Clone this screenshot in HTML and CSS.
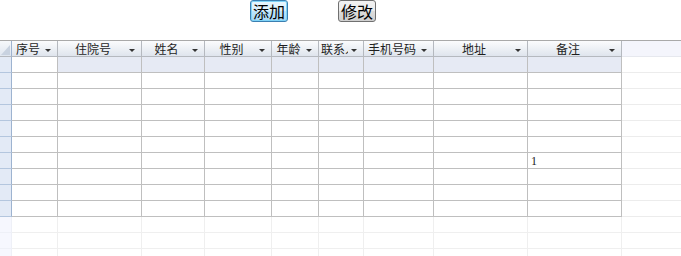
FILE: index.html
```html
<!DOCTYPE html>
<html lang="zh-CN">

<head>
    <meta charset="UTF-8">
    <meta name="viewport" content="width=device-width, initial-scale=1.0">
    <title>病人信息</title>
    <link rel="stylesheet" href="styles.css">
</head>

<body>
    <div class="toolbar">
        <button class="btn btn-focus">添加</button>
        <button class="btn">修改</button>
    </div>

    <div class="grid">
        <div class="row head">
            <div class="rh corner"><svg width="11" height="15" viewBox="0 0 11 15"><polygon points="1,14 10,4 10,14" fill="#c8d2e0" /></svg></div>
            <div class="hc"><span class="label">序号</span><i class="arrow"></i></div>
            <div class="hc"><span class="label">住院号</span><i class="arrow"></i></div>
            <div class="hc"><span class="label">姓名</span><i class="arrow"></i></div>
            <div class="hc"><span class="label">性别</span><i class="arrow"></i></div>
            <div class="hc"><span class="label">年龄</span><i class="arrow"></i></div>
            <div class="hc"><span class="label">联系人</span><i class="arrow"></i></div>
            <div class="hc"><span class="label">手机号码</span><i class="arrow"></i></div>
            <div class="hc"><span class="label">地址</span><i class="arrow"></i></div>
            <div class="hc"><span class="label">备注</span><i class="arrow"></i></div>
            <div class="hpad"></div>
        </div>

        <div class="row new">
            <div class="rh"></div><div class="c cur"></div><div class="c"></div><div class="c"></div><div class="c"></div><div class="c"></div><div class="c"></div><div class="c"></div><div class="c"></div><div class="c"></div><div class="pad"></div>
        </div>
        <div class="row">
            <div class="rh"></div><div class="c"></div><div class="c"></div><div class="c"></div><div class="c"></div><div class="c"></div><div class="c"></div><div class="c"></div><div class="c"></div><div class="c"></div><div class="pad"></div>
        </div>
        <div class="row">
            <div class="rh"></div><div class="c"></div><div class="c"></div><div class="c"></div><div class="c"></div><div class="c"></div><div class="c"></div><div class="c"></div><div class="c"></div><div class="c"></div><div class="pad"></div>
        </div>
        <div class="row">
            <div class="rh"></div><div class="c"></div><div class="c"></div><div class="c"></div><div class="c"></div><div class="c"></div><div class="c"></div><div class="c"></div><div class="c"></div><div class="c"></div><div class="pad"></div>
        </div>
        <div class="row">
            <div class="rh"></div><div class="c"></div><div class="c"></div><div class="c"></div><div class="c"></div><div class="c"></div><div class="c"></div><div class="c"></div><div class="c"></div><div class="c"></div><div class="pad"></div>
        </div>
        <div class="row">
            <div class="rh"></div><div class="c"></div><div class="c"></div><div class="c"></div><div class="c"></div><div class="c"></div><div class="c"></div><div class="c"></div><div class="c"></div><div class="c"></div><div class="pad"></div>
        </div>
        <div class="row">
            <div class="rh"></div><div class="c"></div><div class="c"></div><div class="c"></div><div class="c"></div><div class="c"></div><div class="c"></div><div class="c"></div><div class="c"></div><div class="c">1</div><div class="pad"></div>
        </div>
        <div class="row">
            <div class="rh"></div><div class="c"></div><div class="c"></div><div class="c"></div><div class="c"></div><div class="c"></div><div class="c"></div><div class="c"></div><div class="c"></div><div class="c"></div><div class="pad"></div>
        </div>
        <div class="row">
            <div class="rh"></div><div class="c"></div><div class="c"></div><div class="c"></div><div class="c"></div><div class="c"></div><div class="c"></div><div class="c"></div><div class="c"></div><div class="c"></div><div class="pad"></div>
        </div>
        <div class="row">
            <div class="rh"></div><div class="c"></div><div class="c"></div><div class="c"></div><div class="c"></div><div class="c"></div><div class="c"></div><div class="c"></div><div class="c"></div><div class="c"></div><div class="pad"></div>
        </div>

        <!-- empty area under the data -->
        <div class="row ghost">
            <div class="rh"></div><div class="c"></div><div class="c"></div><div class="c"></div><div class="c"></div><div class="c"></div><div class="c"></div><div class="c"></div><div class="c"></div><div class="c"></div><div class="pad"></div>
        </div>
        <div class="row ghost">
            <div class="rh"></div><div class="c"></div><div class="c"></div><div class="c"></div><div class="c"></div><div class="c"></div><div class="c"></div><div class="c"></div><div class="c"></div><div class="c"></div><div class="pad"></div>
        </div>
        <div class="row ghost">
            <div class="rh"></div><div class="c"></div><div class="c"></div><div class="c"></div><div class="c"></div><div class="c"></div><div class="c"></div><div class="c"></div><div class="c"></div><div class="c"></div><div class="pad"></div>
        </div>
    </div>
</body>

</html>
```

FILE: styles.css
```css
body {
    margin: 0;
    height: 256px;
    overflow: hidden;
    background: #fff;
    font-family: "Noto Sans CJK SC", "DejaVu Sans", sans-serif;
}

.toolbar {
    height: 40px;
    display: flex;
    align-items: flex-start;
    gap: 50px;
    padding-left: 250px;
    box-sizing: border-box;
}

.btn {
    height: 22px;
    padding: 0 2px;
    margin: 0;
    font-family: "Noto Sans CJK SC", sans-serif;
    font-size: 16px;
    line-height: 18px;
    color: #000;
    border: 1px solid #707070;
    border-radius: 3px;
    background: linear-gradient(#f2f2f2 0%, #ebebeb 50%, #dddddd 51%, #cfcfcf 100%);
}

.btn-focus {
    border-color: #3c7fb1;
    box-shadow: inset 0 0 0 1px #7fd3f7;
    background: linear-gradient(#eaf6fd 0%, #d9f0fc 50%, #bee6fd 51%, #a7d9f5 100%);
}

.grid {
    border-top: 1px solid #a9a9a9;
}

.row {
    display: grid;
    grid-template-columns: 12px 46px 84px 63px 67px 47px 45px 70px 94px 94px 1fr;
    height: 16px;
}

.row > div {
    box-sizing: border-box;
    height: 16px;
}

/* header */
.head {
    background: linear-gradient(#fbfcfd, #dde3ec);
}

.rh {
    background: #e3eaf6;
    border-right: 1px solid #9db3d0;
    border-bottom: 1px solid #b4c6de;
}

.corner {
    background: linear-gradient(#f6f8fb, #dfe6f0);
    border-bottom-color: #b5b9bf;
}

.corner svg {
    display: block;
}

.hc {
    display: flex;
    align-items: center;
    border-right: 1px solid #b5b9bf;
    border-bottom: 1px solid #b5b9bf;
    font-size: 12px;
    color: #1e1e1e;
    overflow: hidden;
}

.label {
    flex: 1;
    min-width: 0;
    padding-left: 2px;
    text-align: center;
    white-space: nowrap;
    overflow: hidden;
    line-height: 15px;
}

.arrow {
    flex: none;
    width: 0;
    height: 0;
    margin: 3px 6px 0 3px;
    border-left: 3px solid transparent;
    border-right: 3px solid transparent;
    border-top: 3px solid #333;
}

.hpad {
    background: #f4f5fc;
    border-bottom: 1px solid #e6e8ee;
}

/* body cells */
.c {
    border-right: 1px solid #bfbfbf;
    border-bottom: 1px solid #bfbfbf;
    padding-left: 3px;
    font-family: "Liberation Serif", serif;
    font-size: 12px;
    line-height: 16px;
    color: #222;
}

.pad {
    border-bottom: 1px solid #ececec;
}

.new .c {
    background: #e6eaf4;
}

.new .c.cur {
    background: #fff;
}

.ghost .rh {
    background: #f6f7fe;
    border-right-color: #eef0f7;
    border-bottom-color: #eef0f7;
}

.ghost .c {
    border-right-color: #efefef;
    border-bottom-color: #efefef;
}

.ghost .pad {
    border-bottom-color: #efefef;
}
```
